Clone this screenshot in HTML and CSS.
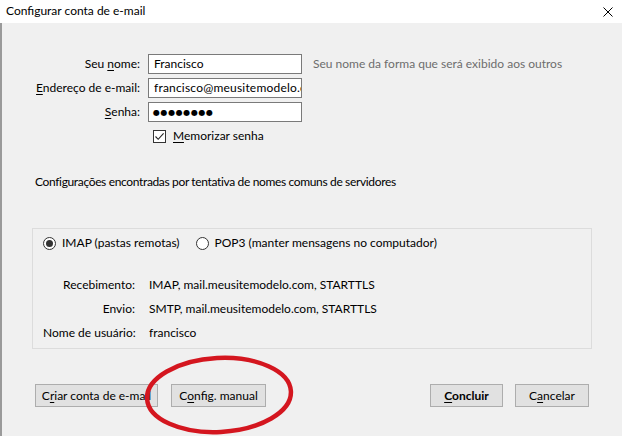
FILE: index.html
```html
<!DOCTYPE html>
<html lang="pt-BR">
<head>
<meta charset="utf-8">
<title>Configurar conta de e-mail</title>
<link rel="stylesheet" href="styles.css">
</head>
<body>
<div class="window">
  <header class="titlebar">
    <span class="title">Configurar conta de e-mail</span>
    <span class="close" aria-label="Fechar">
      <svg width="10" height="10" viewBox="0 0 10 10"><path d="M0.5 0.5 L9.5 9.5 M9.5 0.5 L0.5 9.5" stroke="#000" stroke-width="1" fill="none"/></svg>
    </span>
  </header>
  <main class="content">
    <div class="account">
      <span class="label">Seu <u>n</u>ome:</span>
      <div class="field">Francisco</div>
      <span class="hint">Seu nome da forma que será exibido aos outros</span>

      <span class="label"><u>E</u>ndereço de e-mail:</span>
      <div class="field email">francisco@meusitemodelo.com</div>
      <span></span>

      <span class="label"><u>S</u>enha:</span>
      <div class="field password">●●●●●●●●</div>
      <span></span>

      <span></span>
      <label class="check"><span class="checkbox"><svg width="11" height="11" viewBox="0 0 11 11"><path d="M1.5 5.5 L4.2 8.3 L9.6 2.4" stroke="#222" stroke-width="1.1" fill="none"/></svg></span><span><u>M</u>emorizar senha</span></label>
      <span></span>
    </div>

    <p class="found">Configurações encontradas por tentativa de nomes comuns de servidores</p>

    <section class="group">
      <div class="protocols">
        <label class="radio-option"><span class="radio checked"></span>IMAP (pastas remotas)</label>
        <label class="radio-option"><span class="radio"></span>POP3 (manter mensagens no computador)</label>
      </div>
      <div class="servers">
        <span class="slabel">Recebimento:</span><span>IMAP, mail.meusitemodelo.com, STARTTLS</span>
        <span class="slabel">Envio:</span><span>SMTP, mail.meusitemodelo.com, STARTTLS</span>
        <span class="slabel">Nome de usuário:</span><span>francisco</span>
      </div>
    </section>

    <div class="buttons">
      <div class="button-group">
        <span class="btn btn-create">C<u>r</u>iar conta de e-mail</span>
        <span class="btn btn-manual">C<u>o</u>nfig. manual</span>
      </div>
      <div class="button-group right">
        <span class="btn btn-default btn-done"><u>C</u>oncluir</span>
        <span class="btn btn-cancel">C<u>a</u>ncelar</span>
      </div>
    </div>
  </main>
  <svg class="annotation" width="160" height="86" viewBox="0 0 160 86">
    <ellipse cx="78" cy="41" rx="72" ry="37" transform="rotate(-3 78 41)" fill="none" stroke="#d4161f" stroke-width="4.5"/>
  </svg>
</div>
</body>
</html>
```

FILE: styles.css
```css
* { box-sizing: border-box; }

html, body {
  margin: 0;
  padding: 0;
}

body {
  width: 622px;
  height: 436px;
  overflow: hidden;
  background: #f0f0f0;
  font-family: Lato, Roboto, "Liberation Sans", sans-serif;
  font-size: 12px;
  line-height: 16px;
  color: #000;
}

u { text-decoration: underline; text-underline-offset: 2px; }

.window {
  position: relative;
  width: 622px;
  height: 436px;
}

.titlebar {
  height: 23px;
  background: #fff;
  display: flex;
  align-items: center;
  justify-content: space-between;
  padding: 0 9px 0 6px;
}

.title {
  font-size: 12px;
  margin-top: -1px;
}

.close {
  display: flex;
  width: 10px;
  height: 10px;
  margin-top: 1px;
}

.content {
  height: 413px;
  border-left: 2px solid #9a9a9a;
  padding: 31px 30px 0 30px;
}

.account {
  display: grid;
  grid-template-columns: 108px 154px auto;
  grid-auto-rows: 20px;
  row-gap: 4px;
  column-gap: 8px;
  align-items: center;
}

.label {
  text-align: right;
  white-space: nowrap;
}

.field {
  height: 20px;
  background: #fff;
  border: 1px solid #7a7a7a;
  padding: 1px 0 0 5px;
  line-height: 16px;
  white-space: nowrap;
  overflow: hidden;
}

.email {
  letter-spacing: 0.2px;
}

.password {
  font-family: "DejaVu Sans", sans-serif;
  font-size: 8px;
  letter-spacing: 0.6px;
  line-height: 17px;
  padding-left: 4px;
}

.hint {
  color: #6d6d6d;
  margin-left: 3px;
  white-space: nowrap;
}

.check {
  display: flex;
  align-items: center;
  gap: 7px;
  padding-left: 5px;
}

.checkbox {
  width: 13px;
  height: 13px;
  border: 1px solid #333;
  background: #fff;
  display: flex;
  align-items: center;
  justify-content: center;
}

.found {
  margin: 28px 0 0 3px;
  white-space: nowrap;
  letter-spacing: -0.35px;
}

.group {
  margin-top: 38px;
  height: 121px;
  border: 1px solid #dcdcdc;
  background: #f0f0f0;
  padding: 6px 0 0 10px;
}

.protocols {
  display: flex;
  gap: 16px;
}

.radio-option {
  display: flex;
  align-items: center;
  gap: 6px;
}

.radio {
  width: 13px;
  height: 13px;
  border: 1px solid #333;
  border-radius: 50%;
  background: #fff;
  display: flex;
  align-items: center;
  justify-content: center;
}

.radio.checked::after {
  content: "";
  width: 7px;
  height: 7px;
  border-radius: 50%;
  background: #333;
}

.servers {
  display: grid;
  grid-template-columns: 92px auto;
  column-gap: 14px;
  row-gap: 8px;
  margin-top: 26px;
}

.slabel {
  text-align: right;
  white-space: nowrap;
}

.buttons {
  display: flex;
  justify-content: space-between;
  margin-top: 35px;
  padding: 0 3px;
}

.button-group {
  display: flex;
  gap: 13px;
}

.button-group.right {
  gap: 12px;
}

.btn {
  height: 23px;
  background: #e1e1e1;
  border: 1px solid #adadad;
  display: flex;
  align-items: center;
  justify-content: center;
  white-space: nowrap;
}

.btn-create { width: 123px; }
.btn-manual { width: 95px; }
.btn-done { width: 73px; font-weight: bold; }
.btn-cancel { width: 74px; }

.annotation {
  position: absolute;
  left: 141px;
  top: 354px;
  pointer-events: none;
}
```
